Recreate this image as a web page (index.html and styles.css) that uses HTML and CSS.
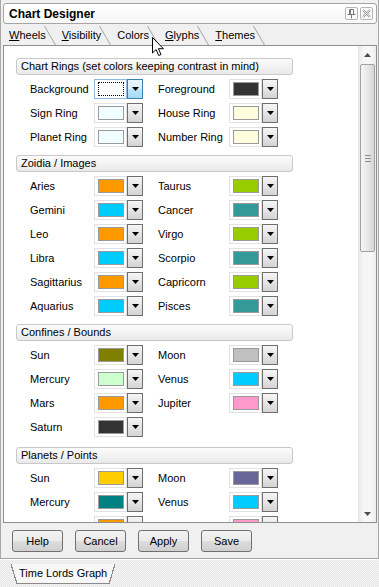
FILE: index.html
```html
<!DOCTYPE html>
<html lang="en">
<head>
    <meta charset="UTF-8">
    <title>Chart Designer</title>
    <link rel="stylesheet" href="styles.css">
</head>
<body>
    <div class="window">
        <div class="titlebar">
            <span class="title">Chart Designer</span>
            <span class="tb-btns">
                <span class="tb-btn">
                    <svg width="9" height="10" viewBox="0 0 9 10"><path d="M2.5 0.5h4v5h-4z M0.5 5.5h8 M4.5 5.5v4 M3.5 0.5v5" fill="none" stroke="#7a7a7a"/></svg>
                </span>
                <span class="tb-btn">
                    <svg width="9" height="9" viewBox="0 0 9 9"><path d="M1 1l7 7M8 1l-7 7" stroke="#9a9a9a" stroke-width="2.2"/><path d="M1 1l7 7M8 1l-7 7" stroke="#fff" stroke-width="0.8"/></svg>
                </span>
            </span>
        </div>

        <div class="tabs">
            <div class="tab"><u>W</u>heels</div>
            <div class="tab"><u>V</u>isibility</div>
            <div class="tab active">Colors</div>
            <div class="tab"><u>G</u>lyphs</div>
            <div class="tab"><u>T</u>hemes</div>
        </div>

        <div class="pane">
            <div class="scroll-area">
                <div class="group">
                    <div class="group-head">Chart Rings (set colors keeping contrast in mind)</div>
                    <div class="row">
                        <span class="lbl">Background</span>
                        <span class="cbtn focused"><span class="sw-box"><span class="sw c-white"></span></span><span class="drop"><svg width="7" height="4"><path d="M0 0h7L3.5 4z"/></svg></span></span>
                        <span class="lbl lbl-right">Foreground</span>
                        <span class="cbtn"><span class="sw-box"><span class="sw c-dark"></span></span><span class="drop"><svg width="7" height="4"><path d="M0 0h7L3.5 4z"/></svg></span></span>
                    </div>
                    <div class="row">
                        <span class="lbl">Sign Ring</span>
                        <span class="cbtn"><span class="sw-box"><span class="sw c-azure"></span></span><span class="drop"><svg width="7" height="4"><path d="M0 0h7L3.5 4z"/></svg></span></span>
                        <span class="lbl lbl-right">House Ring</span>
                        <span class="cbtn"><span class="sw-box"><span class="sw c-ivory"></span></span><span class="drop"><svg width="7" height="4"><path d="M0 0h7L3.5 4z"/></svg></span></span>
                    </div>
                    <div class="row">
                        <span class="lbl">Planet Ring</span>
                        <span class="cbtn"><span class="sw-box"><span class="sw c-azure"></span></span><span class="drop"><svg width="7" height="4"><path d="M0 0h7L3.5 4z"/></svg></span></span>
                        <span class="lbl lbl-right">Number Ring</span>
                        <span class="cbtn"><span class="sw-box"><span class="sw c-ivory"></span></span><span class="drop"><svg width="7" height="4"><path d="M0 0h7L3.5 4z"/></svg></span></span>
                    </div>
                </div>

                <div class="group">
                    <div class="group-head">Zoidia / Images</div>
                    <div class="row">
                        <span class="lbl">Aries</span>
                        <span class="cbtn"><span class="sw-box"><span class="sw c-orange"></span></span><span class="drop"><svg width="7" height="4"><path d="M0 0h7L3.5 4z"/></svg></span></span>
                        <span class="lbl lbl-right">Taurus</span>
                        <span class="cbtn"><span class="sw-box"><span class="sw c-green"></span></span><span class="drop"><svg width="7" height="4"><path d="M0 0h7L3.5 4z"/></svg></span></span>
                    </div>
                    <div class="row">
                        <span class="lbl">Gemini</span>
                        <span class="cbtn"><span class="sw-box"><span class="sw c-cyan"></span></span><span class="drop"><svg width="7" height="4"><path d="M0 0h7L3.5 4z"/></svg></span></span>
                        <span class="lbl lbl-right">Cancer</span>
                        <span class="cbtn"><span class="sw-box"><span class="sw c-teal"></span></span><span class="drop"><svg width="7" height="4"><path d="M0 0h7L3.5 4z"/></svg></span></span>
                    </div>
                    <div class="row">
                        <span class="lbl">Leo</span>
                        <span class="cbtn"><span class="sw-box"><span class="sw c-orange"></span></span><span class="drop"><svg width="7" height="4"><path d="M0 0h7L3.5 4z"/></svg></span></span>
                        <span class="lbl lbl-right">Virgo</span>
                        <span class="cbtn"><span class="sw-box"><span class="sw c-green"></span></span><span class="drop"><svg width="7" height="4"><path d="M0 0h7L3.5 4z"/></svg></span></span>
                    </div>
                    <div class="row">
                        <span class="lbl">Libra</span>
                        <span class="cbtn"><span class="sw-box"><span class="sw c-cyan"></span></span><span class="drop"><svg width="7" height="4"><path d="M0 0h7L3.5 4z"/></svg></span></span>
                        <span class="lbl lbl-right">Scorpio</span>
                        <span class="cbtn"><span class="sw-box"><span class="sw c-teal"></span></span><span class="drop"><svg width="7" height="4"><path d="M0 0h7L3.5 4z"/></svg></span></span>
                    </div>
                    <div class="row">
                        <span class="lbl">Sagittarius</span>
                        <span class="cbtn"><span class="sw-box"><span class="sw c-orange"></span></span><span class="drop"><svg width="7" height="4"><path d="M0 0h7L3.5 4z"/></svg></span></span>
                        <span class="lbl lbl-right">Capricorn</span>
                        <span class="cbtn"><span class="sw-box"><span class="sw c-green"></span></span><span class="drop"><svg width="7" height="4"><path d="M0 0h7L3.5 4z"/></svg></span></span>
                    </div>
                    <div class="row">
                        <span class="lbl">Aquarius</span>
                        <span class="cbtn"><span class="sw-box"><span class="sw c-cyan"></span></span><span class="drop"><svg width="7" height="4"><path d="M0 0h7L3.5 4z"/></svg></span></span>
                        <span class="lbl lbl-right">Pisces</span>
                        <span class="cbtn"><span class="sw-box"><span class="sw c-teal"></span></span><span class="drop"><svg width="7" height="4"><path d="M0 0h7L3.5 4z"/></svg></span></span>
                    </div>
                </div>

                <div class="group group-loose">
                    <div class="group-head">Confines / Bounds</div>
                    <div class="row">
                        <span class="lbl">Sun</span>
                        <span class="cbtn"><span class="sw-box"><span class="sw c-olive"></span></span><span class="drop"><svg width="7" height="4"><path d="M0 0h7L3.5 4z"/></svg></span></span>
                        <span class="lbl lbl-right">Moon</span>
                        <span class="cbtn"><span class="sw-box"><span class="sw c-silver"></span></span><span class="drop"><svg width="7" height="4"><path d="M0 0h7L3.5 4z"/></svg></span></span>
                    </div>
                    <div class="row">
                        <span class="lbl">Mercury</span>
                        <span class="cbtn"><span class="sw-box"><span class="sw c-mint"></span></span><span class="drop"><svg width="7" height="4"><path d="M0 0h7L3.5 4z"/></svg></span></span>
                        <span class="lbl lbl-right">Venus</span>
                        <span class="cbtn"><span class="sw-box"><span class="sw c-cyan"></span></span><span class="drop"><svg width="7" height="4"><path d="M0 0h7L3.5 4z"/></svg></span></span>
                    </div>
                    <div class="row">
                        <span class="lbl">Mars</span>
                        <span class="cbtn"><span class="sw-box"><span class="sw c-orange"></span></span><span class="drop"><svg width="7" height="4"><path d="M0 0h7L3.5 4z"/></svg></span></span>
                        <span class="lbl lbl-right">Jupiter</span>
                        <span class="cbtn"><span class="sw-box"><span class="sw c-pink"></span></span><span class="drop"><svg width="7" height="4"><path d="M0 0h7L3.5 4z"/></svg></span></span>
                    </div>
                    <div class="row">
                        <span class="lbl">Saturn</span>
                        <span class="cbtn"><span class="sw-box"><span class="sw c-dark"></span></span><span class="drop"><svg width="7" height="4"><path d="M0 0h7L3.5 4z"/></svg></span></span>
                    </div>
                </div>

                <div class="group">
                    <div class="group-head">Planets / Points</div>
                    <div class="row">
                        <span class="lbl">Sun</span>
                        <span class="cbtn"><span class="sw-box"><span class="sw c-gold"></span></span><span class="drop"><svg width="7" height="4"><path d="M0 0h7L3.5 4z"/></svg></span></span>
                        <span class="lbl lbl-right">Moon</span>
                        <span class="cbtn"><span class="sw-box"><span class="sw c-slate"></span></span><span class="drop"><svg width="7" height="4"><path d="M0 0h7L3.5 4z"/></svg></span></span>
                    </div>
                    <div class="row">
                        <span class="lbl">Mercury</span>
                        <span class="cbtn"><span class="sw-box"><span class="sw c-deepteal"></span></span><span class="drop"><svg width="7" height="4"><path d="M0 0h7L3.5 4z"/></svg></span></span>
                        <span class="lbl lbl-right">Venus</span>
                        <span class="cbtn"><span class="sw-box"><span class="sw c-cyan"></span></span><span class="drop"><svg width="7" height="4"><path d="M0 0h7L3.5 4z"/></svg></span></span>
                    </div>
                    <div class="row">
                        <span class="lbl">Mars</span>
                        <span class="cbtn"><span class="sw-box"><span class="sw c-orange"></span></span><span class="drop"><svg width="7" height="4"><path d="M0 0h7L3.5 4z"/></svg></span></span>
                        <span class="lbl lbl-right">Jupiter</span>
                        <span class="cbtn"><span class="sw-box"><span class="sw c-pink"></span></span><span class="drop"><svg width="7" height="4"><path d="M0 0h7L3.5 4z"/></svg></span></span>
                    </div>
                </div>
            </div>

            <div class="scrollbar">
                <div class="sb-arrow"><svg width="7" height="4"><path d="M0 4h7L3.5 0z" fill="#4d4d4d"/></svg></div>
                <div class="sb-track">
                    <div class="sb-thumb">
                        <span class="grip"></span>
                    </div>
                </div>
                <div class="sb-arrow"><svg width="7" height="4"><path d="M0 0h7L3.5 4z" fill="#4d4d4d"/></svg></div>
            </div>
        </div>

        <div class="actions">
            <button class="btn">Help</button>
            <button class="btn">Cancel</button>
            <button class="btn">Apply</button>
            <button class="btn">Save</button>
        </div>
    </div>

    <div class="dock">
        <div class="dock-tab">Time Lords Graph</div>
    </div>

    <!-- mouse pointer over the Colors tab -->
    <svg class="cursor" width="13" height="20" viewBox="0 0 13 20">
        <path d="M0.5 0.5v15.5l3.6-3.5 2.6 6 2.3-1-2.6-5.8h5z" fill="#fff" stroke="#000" stroke-linejoin="round"/>
    </svg>
</body>
</html>
```

FILE: styles.css
```css
body {
    margin: 0;
    width: 379px;
    height: 587px;
    overflow: hidden;
    position: relative;
    background: #f0f0f0;
    font-family: "Liberation Sans", Arial, sans-serif;
    font-size: 11px;
    color: #000;
}

.window {
    height: 559px;
    box-sizing: border-box;
    padding: 3px 1px 0 2px;
    border-left: 1px solid #a7a7a7;
    border-right: 1px solid #a7a7a7;
    border-bottom: 1px solid #a0a0a0;
}

/* title bar */
.titlebar {
    height: 21px;
    box-sizing: border-box;
    display: flex;
    align-items: center;
    padding: 0 3px 0 5px;
    border: 1px solid #a5a5a5;
    border-radius: 3px;
    background: linear-gradient(#ffffff, #f7f7f7);
}

.title {
    font-size: 12px;
    font-weight: bold;
}

.tb-btns {
    margin-left: auto;
    display: flex;
    gap: 2px;
}

.tb-btn {
    width: 13px;
    height: 13px;
    box-sizing: border-box;
    display: flex;
    align-items: center;
    justify-content: center;
    border: 1px solid #b5b5b5;
    border-radius: 2px;
    background: #fbfbfb;
}

/* tabs */
.tabs {
    height: 21px;
    display: flex;
}

.tab {
    position: relative;
    padding: 3px 10px 0 6px;
    line-height: 17px;
}

.tab::after {
    content: "";
    position: absolute;
    right: 0;
    top: 2px;
    bottom: 0;
    width: 1px;
    background: #a4a4a4;
    transform: skewX(30deg);
    transform-origin: bottom;
}

.tab u {
    text-decoration-thickness: 1px;
}

/* content pane */
.pane {
    height: 478px;
    box-sizing: border-box;
    display: flex;
    border: 1px solid #8e8f8f;
    background: #fff;
}

.scroll-area {
    flex: 1;
    overflow: hidden;
    padding: 12px 0 0 12px;
}

.group {
    margin-bottom: 6px;
}

.group-loose {
    margin-bottom: 8px;
}

.group-head {
    width: 277px;
    height: 17px;
    box-sizing: border-box;
    padding-left: 4px;
    line-height: 15px;
    border: 1px solid #c8c8c8;
    border-radius: 3px;
    background: linear-gradient(#fcfcfc, #e9e9e9);
    margin-bottom: 2px;
}

.row {
    height: 24px;
    padding-left: 14px;
    display: grid;
    grid-template-columns: 64px 49px 86px 49px;
    align-items: center;
}

.lbl-right {
    padding-left: 15px;
}

/* colour picker button */
.cbtn {
    display: flex;
    height: 20px;
}

.sw-box {
    width: 33px;
    box-sizing: border-box;
    padding: 2px 0 0 3px;
    border: 1px solid #e2e2e2;
    background: #fff;
}

.sw {
    display: block;
    width: 26px;
    height: 14px;
    box-sizing: border-box;
    border: 1px solid #9a9a9a;
}

.drop {
    width: 16px;
    box-sizing: border-box;
    display: flex;
    align-items: center;
    justify-content: center;
    border: 1px solid #6e6e6e;
    background: linear-gradient(#f6f6f6, #d4d4d4);
}

.focused .sw-box {
    border-color: #8fb8e0;
}

.focused .sw {
    border: 1px dotted #000;
}

.focused .drop {
    border-color: #3c7fb1;
    background: linear-gradient(#eaf6fd 0%, #d9f0fc 50%, #bee6fd 50%, #a7d9f5 100%);
}

.c-white { background: #fff; }
.c-dark { background: #333333; }
.c-azure { background: #f0ffff; }
.c-ivory { background: #ffffdd; }
.c-orange { background: #ff9900; }
.c-green { background: #99cc00; }
.c-cyan { background: #00ccff; }
.c-teal { background: #339999; }
.c-olive { background: #808000; }
.c-silver { background: #c0c0c0; }
.c-mint { background: #ccffcc; }
.c-pink { background: #ff99cc; }
.c-gold { background: #ffcc00; }
.c-slate { background: #666699; }
.c-deepteal { background: #008080; }

/* scrollbar */
.scrollbar {
    width: 17px;
    display: flex;
    flex-direction: column;
    border-left: 1px solid #e6e6e6;
    background: linear-gradient(90deg, #e9e9e9, #f6f6f6 25%, #f6f6f6 75%, #ececec);
}

.sb-arrow {
    height: 17px;
    display: flex;
    align-items: center;
    justify-content: center;
}

.sb-track {
    flex: 1;
    padding: 1px 1px 0 1px;
}

.sb-thumb {
    height: 188px;
    box-sizing: border-box;
    display: flex;
    align-items: center;
    justify-content: center;
    border: 1px solid #a2a2a2;
    border-radius: 2px;
    background: linear-gradient(90deg, #f5f5f5, #e8e8e8 50%, #d6d6d6);
}

.grip {
    width: 6px;
    height: 5px;
    border-top: 1px solid #8f8f8f;
    border-bottom: 1px solid #8f8f8f;
    background: linear-gradient(#8f8f8f, #8f8f8f) center / 6px 1px no-repeat;
}

/* dialog buttons */
.actions {
    display: flex;
    gap: 12px;
    padding: 7px 0 0 9px;
}

.btn {
    width: 51px;
    height: 22px;
    padding: 0;
    line-height: 20px;
    border: 1px solid #707070;
    border-radius: 3px;
    background: linear-gradient(#f2f2f2 0%, #ebebeb 50%, #dddddd 50%, #cfcfcf 100%);
    font-family: inherit;
    font-size: 11px;
    color: #000;
}

/* bottom dock */
.dock {
    height: 28px;
    border-top: 1px solid #fff;
    padding-top: 4px;
    box-sizing: border-box;
    background: repeating-conic-gradient(#e6e6e6 0 25%, #f5f5f5 0 50%) 0 0 / 2px 2px;
}

.dock-tab {
    position: relative;
    display: inline-block;
    margin-left: 17px;
    padding: 0 2px;
    height: 19px;
    line-height: 18px;
    border-bottom: 1px solid #8a8a8a;
    background: #f7f7f7;
}

.dock-tab::before,
.dock-tab::after {
    content: "";
    position: absolute;
    top: 0;
    bottom: -1px;
    width: 6px;
}

.dock-tab::before {
    left: -6px;
    background: linear-gradient(to top right, transparent calc(50% - 0.6px), #8a8a8a calc(50% - 0.6px), #8a8a8a calc(50% + 0.6px), #f7f7f7 calc(50% + 0.6px));
}

.dock-tab::after {
    right: -6px;
    background: linear-gradient(to bottom right, #f7f7f7 calc(50% - 0.6px), #8a8a8a calc(50% - 0.6px), #8a8a8a calc(50% + 0.6px), transparent calc(50% + 0.6px));
}

.cursor {
    position: absolute;
    left: 152px;
    top: 37px;
}
```
